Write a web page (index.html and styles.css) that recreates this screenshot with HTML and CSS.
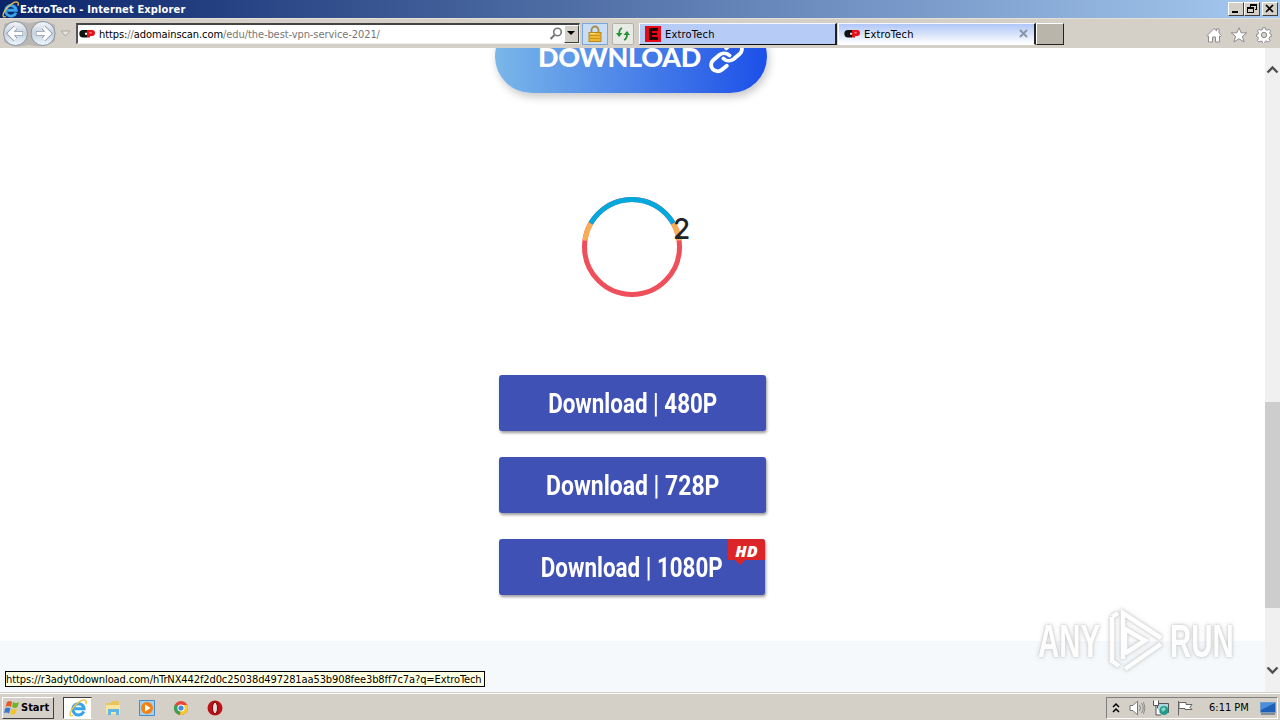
FILE: index.html
```html
<!DOCTYPE html>
<html lang="en">
<head>
    <meta charset="utf-8">
    <title>ExtroTech</title>
    <link rel="stylesheet" href="styles.css">
</head>
<body>
    <svg class="defs" width="0" height="0">
        <symbol id="ie" viewBox="0 0 16 16">
            <path d="M13.100 11A5 5 0 1 1 13.400 8.700H5" fill="none" stroke="#3aa4ea" stroke-width="2.700"/>
            <path d="M3.700 14.600C.5 16 .2 13.200 2.400 9.500 5.500 4.300 12.400-.6 14.800 1.300c.9.800.6 2.100 0 3.200" fill="none" stroke="#f3c43b" stroke-width="1.200"/>
        </symbol>
        <symbol id="cp" viewBox="0 0 16 16">
            <path d="M8 4H4a3.700 3.700 0 0 0 0 7.400h4V8.800H6V6.700h2z" fill="#111"/>
            <path d="M8 4h5a3 3 0 0 1 0 6h-2v1.400H8z" fill="#e80e18"/>
            <path d="M10.500 6.500h2v.8h-2z" fill="#fff"/>
        </symbol>
    </svg>

    <header class="title-bar">
        <svg class="icon" width="17" height="17"><use href="#ie"/></svg>
        <span class="title-text">ExtroTech - Internet Explorer</span>
        <div class="win-buttons">
            <div class="win-btn"><svg width="14" height="12"><path d="M3 8h6v2H3z"/></svg></div>
            <div class="win-btn"><svg width="14" height="12"><path d="M5 1h7v6h-2V6h1V3H6v1H5zM2 4h7v6H2zM3 6v3h5V6z" fill-rule="evenodd"/></svg></div>
            <div class="win-btn close"><svg width="14" height="12"><path d="M3 2l7 7M10 2L3 9" stroke="#000" stroke-width="1.700"/></svg></div>
        </div>
    </header>

    <nav class="toolbar">
        <svg class="nav-arrows" width="72" height="30">
            <defs>
                <linearGradient id="ball" x2="0" y2="1">
                    <stop offset="0" stop-color="#f5f7fa"/>
                    <stop offset=".5" stop-color="#c6d0dd"/>
                    <stop offset="1" stop-color="#eef9ff"/>
                </linearGradient>
            </defs>
            <path d="M4 5Q15 0 29 4Q44 0 55 6V22Q44 30 29 26Q14 30 4 23z" fill="#bbb8b3"/>
            <circle cx="15.500" cy="14.500" r="12" fill="url(#ball)" stroke="#8793a0"/>
            <circle cx="43" cy="14.500" r="12" fill="url(#ball)" stroke="#8793a0"/>
            <path d="M23 14.500H10M15.500 8.500L9.500 14.500l6 6M36 14.500h13M43.500 8.500l6 6-6 6" fill="none" stroke="#8495a8" stroke-width="4.800"/>
            <path d="M22.500 14.500H10M15.500 8.500L9.500 14.500l6 6M36.500 14.500h13M43.500 8.500l6 6-6 6" fill="none" stroke="#fff" stroke-width="3.300"/>
            <path d="M61 12h9l-4.500 5z" fill="#e8e5df" stroke="#aaa69f"/>
        </svg>
        <div class="address">
            <svg class="icon" width="16" height="16"><use href="#cp"/></svg>
            <span class="url">https:<i>//</i>adomainscan.com<i>/edu/the-best-vpn-service-2021/</i></span>
            <svg class="search" width="14" height="14"><circle cx="8.500" cy="5" r="3.800" fill="#fff" stroke="#777" stroke-width="1.600"/><path d="M5.500 8L1.500 12" stroke="#777" stroke-width="2.200"/></svg>
            <div class="drop"><svg width="12" height="14"><path d="M2 5h8L6 9z"/></svg></div>
        </div>
        <div class="lock">
            <svg width="16" height="18"><path d="M4.500 8V5a3.500 3.500 0 0 1 7 0v3" fill="none" stroke="#a88b45" stroke-width="1.800"/><rect x="2" y="7.500" width="12" height="9" fill="#efb62e" stroke="#b98720"/><path d="M2.500 10.500h11M2.500 13.500h11" stroke="#cb9423"/><path d="M3 8.500h5" stroke="#ffe48a"/></svg>
        </div>
        <div class="refresh">
            <svg width="16" height="16"><path d="M7 2Q4 3 4 9" fill="none" stroke="#249334" stroke-width="1.800"/><path d="M1 7h6.500L4 11z" fill="#249334"/><path d="M9 14q3-1 3-6" fill="none" stroke="#249334" stroke-width="1.800"/><path d="M8.500 9H15L12 5z" fill="#249334"/></svg>
        </div>
        <div class="tab">
            <svg class="icon" width="16" height="16"><path d="M0 0h16v16H0z" fill="#e80716"/><path d="M4 2h9v3H7v2h5v2H7v2h6v3H4z" fill="#210000"/></svg>
            <span>ExtroTech</span>
        </div>
        <div class="tab active">
            <svg class="icon" width="16" height="16"><use href="#cp"/></svg>
            <span>ExtroTech</span>
            <svg class="tab-close" width="9" height="9"><path d="M1 1l7 7M8 1L1 8" stroke="#8b95a5" stroke-width="2"/></svg>
        </div>
        <div class="new-tab"></div>
        <div class="tools">
            <svg width="16" height="16"><path d="M1 8.500L8 1.500l2.500 2.300V2H13v4.200L15.500 8.500l-1 1L13.500 9v6h-4v-5h-3v5h-4V9l-1 .5z" fill="#fff" stroke="#8d8d8d"/></svg>
            <svg width="18" height="16"><path d="M9 .8l2.200 5H16.800l-4.400 3.500 1.700 5.700L9 11.800 3.900 15l1.700-5.700L1.200 5.800h5.600z" fill="#fff" stroke="#8d8d8d"/></svg>
            <svg width="16" height="16"><path d="M6.800.7h2.400l.5 2 1.400.6 1.900-1.100 1.700 1.700-1 1.900.5 1.300 1.200.4v2l-1.800.5-.6 1.500 1 1.900-1.600 1.600-1.900-1-1.400.6-.5 1.900H6.800l-.5-1.900-1.400-.6-1.900 1-1.600-1.600 1-1.900L1.800 10 .5 9.500v-2L2 7.100l.5-1.300-1-1.900 1.700-1.700 1.800 1.100 1.300-.6z" fill="#fff" stroke="#8d8d8d"/><circle cx="8" cy="8" r="2.700" fill="#d4d0c8" stroke="#8d8d8d"/></svg>
        </div>
    </nav>

    <div class="window">
        <main class="page">
            <a class="pill"><span>DOWNLOAD</span>
                <svg width="37" height="36" viewBox="0 0 24 24" preserveAspectRatio="none"><g fill="none" stroke="#fff" stroke-width="2.500" stroke-linecap="round" stroke-linejoin="round"><path d="M10 13a5 5 0 0 0 6.500.500l4-3.500a4 4 0 0 0-5.500-6.500l-3.200 2.700"/><path d="M14 11a5 5 0 0 0-6.500-.500l-4 3.500a4 4 0 0 0 5.500 6.500l3.200-2.700"/></g></svg>
            </a>
            <div class="spinner">
                <svg width="100" height="100" fill="none" stroke-width="5">
                    <circle cx="50" cy="50" r="47.500" stroke="#ef4f5b"/>
                    <path d="M2.900 43.500A47.500 47.500 0 0 1 8.800 26.300M91.200 26.300A47.500 47.500 0 0 1 97.100 43.500" stroke="#f9ad57"/>
                    <path d="M8.800 26.300A47.500 47.500 0 0 1 91.200 26.300" stroke="#03a9dc"/>
                </svg>
                <span class="count">2</span>
            </div>
            <div class="links">
                <a class="btn"><span>Download | 480P</span></a>
                <a class="btn wide"><span>Download | 728P</span></a>
                <a class="btn hd"><span>Download | 1080P</span><b class="badge">HD</b></a>
            </div>
            <div class="footer"></div>
        </main>
        <div class="scrollbar">
            <svg width="15" height="14"><path d="M2.500 9.500L7.500 4.500l5 5" fill="none" stroke="#505050" stroke-width="2.400"/></svg>
            <div class="thumb"></div>
            <svg width="15" height="14"><path d="M2.500 4.500L7.500 9.500l5-5" fill="none" stroke="#505050" stroke-width="2.400"/></svg>
        </div>
        <div class="status"><span>https://r3adyt0download.com/hTrNX442f2d0c25038d497281aa53b908fee3b8ff7c7a?q=ExtroTech</span></div>
        <div class="watermark">
            <span>ANY</span>
            <svg width="60" height="66" viewBox="0 0 60 66"><path d="M18 51V5L56 30M20 61L56 36M20 44V21l20 11.500-20 13M7 9V53l7 5M7 9l6-4" fill="none" stroke="#fff" stroke-width="4.500"/></svg>
            <span>RUN</span>
        </div>
    </div>

    <footer class="taskbar">
        <div class="start">
            <svg width="17" height="16"><path d="M3 2q3-2 5 0L7 7Q4 5 1.500 7z" fill="#e65b25"/><path d="M9 2q3 2 6 0l-1.500 5Q11 9 8 7z" fill="#72b52c"/><path d="M1 8.500q3-2 5.500 0L5 13.500q-3-2-5 0z" fill="#3779d1"/><path d="M7.500 8.500q3 2 5.500 0l-1.500 5q-3 2-5.500 0z" fill="#f6c226"/></svg>
            <span>Start</span>
        </div>
        <div class="task-active"><svg width="18" height="18"><use href="#ie"/></svg></div>
        <div class="quick">
            <svg width="16" height="16"><path d="M1 3h5l1-2h7v4H1z" fill="#e6c45f"/><path d="M1 5h14v9H1z" fill="#f7e69b"/><path d="M3 15V9h11v6h-3v-3H6v3z" fill="#62b6e4"/></svg>
            <svg width="16" height="16"><path d="M.5.5h15v15H.5z" fill="#a5cff0" stroke="#4c8ac4"/><circle cx="8" cy="8" r="6" fill="#f08313"/><path d="M6 4.500L11.500 8 6 11.500z" fill="#fff"/></svg>
            <svg width="16" height="16"><circle cx="8" cy="8" r="7" fill="#e3483b"/><path d="M8 8L2 4.400A7 7 0 0 0 7 15z" fill="#39a354"/><path d="M8 8h7a7 7 0 0 1-8 7z" fill="#f6cb32"/><path d="M8 5h6.400a7 7 0 0 1 .6 3H8z" fill="#f6cb32"/><circle cx="8" cy="8" r="3.600" fill="#fff"/><circle cx="8" cy="8" r="2.600" fill="#4287e5"/></svg>
            <svg width="16" height="16"><circle cx="8" cy="8" r="7.500" fill="#b91217"/><ellipse cx="8" cy="8" rx="2.500" ry="5.700" fill="#e9dedd" stroke="#780509"/></svg>
        </div>
        <div class="tray">
            <svg width="8" height="12"><path d="M1 5l3-3 3 3M1 10l3-3 3 3" fill="none" stroke="#000" stroke-width="1.500"/></svg>
            <svg width="17" height="16"><path d="M1 5.500h3L8.500 1v14L4 10.500H1z" fill="#fff" stroke="#777"/><path d="M10.500 5q2 3 0 6M12.500 3q3.500 5 0 10M14.500 2q3 6 0 12" fill="none" stroke="#888"/></svg>
            <svg width="17" height="16"><path d="M4.500 3.500h11v9h-11z" fill="#a9d5df" stroke="#555"/><path d="M.5.500v5h5v-5M3 5.500V15h5" fill="#fff" stroke="#555"/><circle cx="11" cy="10.500" r="4.500" fill="#22998a"/><path d="M8 9l3-2 2 2-3 3z" fill="#88d6c0"/></svg>
            <svg width="17" height="16"><path d="M1.500 1v14.500M2 2.500h7v2h6l-2 3 2 2H8v-1H2z" fill="#fff" stroke="#666"/></svg>
            <span class="clock">6:11 PM</span>
            <svg width="16" height="14"><path d="M.5 1.500h15v10H.5z" fill="#1e5fb8" stroke="#6d9bcc"/><path d="M1 2h14L1 9z" fill="#4b8edb"/><path d="M1 13h14" stroke="#3c4852"/></svg>
        </div>
    </footer>
</body>
</html>
```
FILE: styles.css
```css
* {
    box-sizing: border-box;
}
body {
    margin: 0;
    height: 720px;
    overflow: hidden;
    display: flex;
    flex-direction: column;
    background: #fff;
    color: #000;
    font-family: "DejaVu Sans Condensed", "DejaVu Sans", sans-serif;
    font-size: 11px;
    white-space: nowrap;
}
svg {
    display: block;
    flex-shrink: 0;
}
.defs {
    position: absolute;
}

/* title bar */
.title-bar {
    height: 18px;
    flex-shrink: 0;
    display: flex;
    align-items: center;
    padding: 0 2px 0 2px;
    background: linear-gradient(90deg, #0a246a, #a6caf0);
    color: #fff;
}
.title-text {
    font-weight: bold;
    margin-left: 1px;
    letter-spacing: 0.14px;
}
.win-buttons {
    display: flex;
    margin-left: auto;
}
.win-btn {
    width: 16px;
    height: 14px;
    background: #d4d0c8;
    border: 1px solid;
    border-color: #fff #404040 #404040 #fff;
    overflow: hidden;
}
.close {
    margin-left: 2px;
}

/* toolbar */
.toolbar {
    height: 30px;
    flex-shrink: 0;
    display: flex;
    align-items: center;
    background: #d4d0c8;
    border-top: 1px solid #e4e0d8;
}
.address {
    width: 504px;
    height: 21px;
    margin-left: 4px;
    padding-left: 1px;
    display: flex;
    align-items: center;
    background: #fff;
    border: 1px solid;
    border-width: 2px 1px 1px 2px;
    border-color: #444 #eee #eee #555;
}
.url {
    margin-left: 4px;
    letter-spacing: -0.08px;
}
.url i {
    font-style: normal;
    color: #777;
}
.search {
    margin-left: auto;
    margin-right: 1px;
}
.drop {
    width: 15px;
    height: 18px;
    background: #d4d0c8;
    border: 1px solid;
    border-color: #fff #404040 #404040 #fff;
}
.lock {
    width: 26px;
    height: 22px;
    margin-left: 2px;
    display: grid;
    place-items: center;
    background: #c9def5;
    border: 1px solid #7da7dc;
}
.refresh {
    width: 22px;
    height: 22px;
    margin: 0 5px 0 4px;
    display: grid;
    place-items: center;
    background: #e9e9e5;
    border: 1px solid #b3b3ad;
    border-radius: 2px;
}
.tab {
    width: 198px;
    height: 22px;
    display: flex;
    align-items: center;
    padding-left: 5px;
    gap: 4px;
    background: #b7cbf7;
    border: 1px solid;
    border-color: #f5f7ff #222 #111 #fff;
    border-right-width: 2px;
}
.tab span {
    padding-top: 1px;
    letter-spacing: 0.2px;
}
.tab.active {
    margin-left: 1px;
    background: linear-gradient(#afc6f8, #fff);
    border-bottom-color: #fff;
}
.tab-close {
    margin: 0 6px 0 auto;
}
.new-tab {
    width: 28px;
    height: 22px;
    background: #bab5ab;
    border: 1px solid;
    border-color: #fff #222 #222 #fff;
}
.tools {
    display: flex;
    align-items: center;
    gap: 8px;
    margin: 2px 8px 0 auto;
}

/* page */
.window {
    position: relative;
    height: 644px;
    display: flex;
    overflow: hidden;
}
.page {
    width: 1265px;
    display: flex;
    flex-direction: column;
    align-items: center;
}
.pill {
    width: 272px;
    height: 73px;
    margin: -28px 3px 0 0;
    padding-left: 43px;
    display: flex;
    align-items: center;
    flex-shrink: 0;
    border-radius: 37px;
    background: linear-gradient(90deg, #7ab7e9, #1c4fe8);
    box-shadow: 2px 4px 9px rgba(0, 0, 0, 0.22);
    color: #fff;
    font: 900 27px Lato, sans-serif;
}
.pill span {
    letter-spacing: -0.35px;
}
.pill svg {
    margin-left: 7px;
    margin-top: 1px;
}
.spinner {
    position: relative;
    width: 100px;
    height: 100px;
    margin-top: 104px;
    margin-right: 1px;
    flex-shrink: 0;
}
.count {
    position: absolute;
    left: 91px;
    top: 15px;
    font: 500 28px/34px Inter, sans-serif;
    color: #212529;
}
.links {
    display: flex;
    flex-direction: column;
    gap: 26px;
    width: 267px;
    margin-top: 78px;
}
.btn {
    position: relative;
    height: 56px;
    display: flex;
    align-items: center;
    justify-content: center;
    border-radius: 3px;
    background: #3f51b5;
    box-shadow: 1px 2px 3px rgba(0, 0, 0, 0.4);
    color: #fff;
    font: bold 28px Roboto, sans-serif;
}
.btn span {
    transform: scaleX(0.8);
}
.btn.wide span {
    transform: scaleX(0.82);
}
.hd {
    width: 266px;
}
.badge {
    position: absolute;
    right: 0;
    top: 0;
    width: 37px;
    height: 21px;
    background: #dc2528;
    border-radius: 0 3px 0 0;
    font: italic 800 16px/24px "Open Sans", sans-serif;
    text-align: center;
}
.badge::after {
    content: "";
    position: absolute;
    left: 7px;
    top: 21px;
    border: 5px solid transparent;
    border-top-color: #dc2528;
    border-bottom: 0;
}
.footer {
    width: 100%;
    flex: 1;
    margin-top: 46px;
    background: #f5f9fc;
}
.scrollbar {
    width: 15px;
    padding: 15px 0;
    display: flex;
    flex-direction: column;
    background: #f0f0f0;
}
.thumb {
    height: 206px;
    margin-top: 325px;
    margin-bottom: auto;
    background: #cdcdcd;
}
.status {
    position: absolute;
    left: 5px;
    top: 623px;
    width: 480px;
    height: 16px;
    line-height: 15px;
    letter-spacing: -0.1px;
    background: #ffffe1;
    border: 1px solid #000;
}
.watermark {
    position: absolute;
    left: 1038px;
    top: 560px;
    display: flex;
    align-items: center;
    gap: 5px;
    color: #fff;
    font: bold 46px/66px "Liberation Sans", sans-serif;
    filter: drop-shadow(0 0 1px #bbb) drop-shadow(0 0 2px #ccc);
    opacity: 0.8;
}
.watermark span {
    width: 62px;
    transform: scaleX(0.64);
    transform-origin: left;
}

/* taskbar */
.taskbar {
    height: 28px;
    flex-shrink: 0;
    display: flex;
    align-items: center;
    padding: 2px 2px 0;
    background: #d4d0c8;
    border-top: 1px solid #d4d0c8;
    box-shadow: inset 0 1px #fff;
}
.start {
    width: 52px;
    height: 22px;
    display: flex;
    align-items: center;
    padding-left: 1px;
    border: 1px solid;
    border-color: #fff #404040 #404040 #fff;
    font-weight: bold;
}
.task-active {
    width: 29px;
    height: 22px;
    margin-left: 9px;
    display: grid;
    place-items: center;
    background: #fff;
    border: 1px solid;
    border-color: #404040 #d4d0c8 #fff #404040;
}
.quick {
    display: flex;
    gap: 18px;
    margin-left: 13px;
}
.tray {
    width: 172px;
    height: 22px;
    margin-left: auto;
    display: flex;
    align-items: center;
    padding-left: 5px;
    border: 1px solid;
    border-color: #808080 #fff #fff #808080;
}
.tray svg + svg {
    margin-left: 7px;
}
.tray svg:nth-child(2) {
    margin-left: 9px;
}
.clock {
    width: 40px;
    margin: 0 11px 0 15px;
}
```
